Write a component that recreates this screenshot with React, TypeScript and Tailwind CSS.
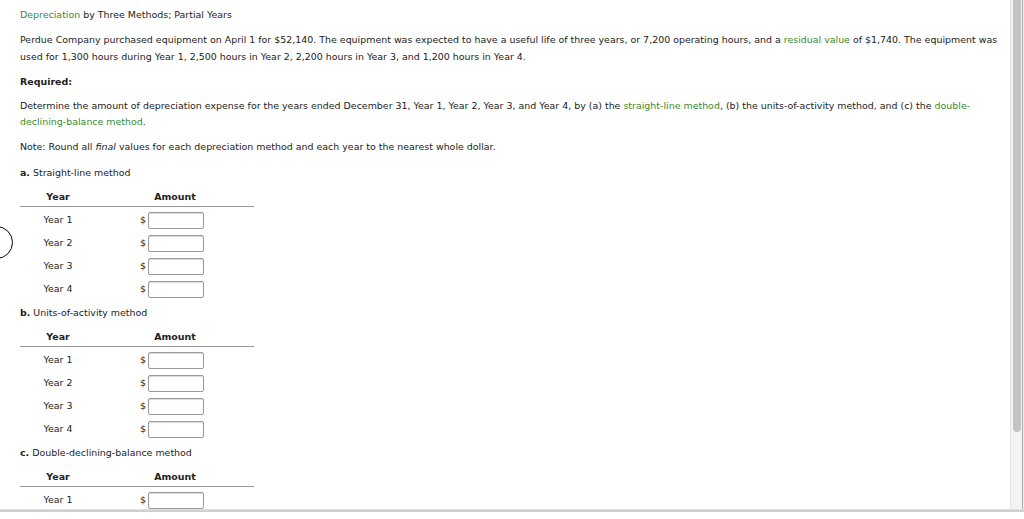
import React from "react";

const G = "text-[#3a8a34]";

function Label({ letter, text }: { letter: string; text: string }) {
  return (
    <div className="h-[17px] leading-[17px]">
      <span className="font-bold">{letter}</span> {text}
    </div>
  );
}

function Table({ rows }: { rows: string[] }) {
  return (
    <div className="w-[234px]">
      <div className="h-[26px] flex items-end pb-[1px] border-b border-[#999] font-bold">
        <div className="w-[76px] text-center leading-[17px]">Year</div>
        <div className="flex-1 text-center leading-[17px]">Amount</div>
      </div>
      <div className="pt-[2px]">
        {rows.map((r) => (
          <div key={r} className="h-[23px] flex items-center">
            <div className="w-[76px] text-center">{r}</div>
            <div className="flex-1 flex items-center pl-[44px]">
              <span className="w-[8px]">$</span>
              <input
                className="w-[56px] h-[17px] border border-[#9a9a9a] rounded-[2px] bg-white shadow-[inset_0_1px_1px_rgba(0,0,0,0.15)] outline-none"
                type="text"
              />
            </div>
          </div>
        ))}
      </div>
    </div>
  );
}

export default function App() {
  const rows4 = ["Year 1", "Year 2", "Year 3", "Year 4"];
  return (
    <div
      className="w-[1024px] h-[519px] overflow-hidden bg-white text-[#222] relative"
      style={{ fontFamily: '"DejaVu Sans", Verdana, sans-serif' }}
    >
      <div className="flex h-[509px]">
        <div className="flex-1 overflow-hidden pl-[20px] pr-[4px] pt-[6px] text-[9.45px]">
          <div className="h-[17px] leading-[17px] mb-[8px]">
            <span className={G}>Depreciation</span> by Three Methods; Partial Years
          </div>
          <p className="leading-[17px] mb-[8px] whitespace-nowrap">
            Perdue Company purchased equipment on April 1 for $52,140. The equipment was expected to have a useful life of three years, or 7,200 operating hours, and a{" "}
            <span className={G}>residual value</span> of $1,740. The equipment was
            <br />
            used for 1,300 hours during Year 1, 2,500 hours in Year 2, 2,200 hours in Year 3, and 1,200 hours in Year 4.
          </p>
          <div className="h-[17px] leading-[17px] mb-[8px] font-bold">Required:</div>
          <p className="leading-[16px] mb-[8px] whitespace-nowrap">
            Determine the amount of depreciation expense for the years ended December 31, Year 1, Year 2, Year 3, and Year 4, by (a) the{" "}
            <span className={G}>straight-line method</span>, (b) the units-of-activity method, and (c) the{" "}
            <span className={G}>double-</span>
            <br />
            <span className={G}>declining-balance method</span>.
          </p>
          <div className="h-[17px] leading-[17px]">
            Note: Round all <i>final</i> values for each depreciation method and each year to the nearest whole dollar.
          </div>
          <div className="mt-[9px]">
            <Label letter="a." text="Straight-line method" />
            <Table rows={rows4} />
          </div>
          <div className="mt-[3px]">
            <Label letter="b." text="Units-of-activity method" />
            <Table rows={rows4} />
          </div>
          <div className="mt-[3px]">
            <Label letter="c." text="Double-declining-balance method" />
            <Table rows={["Year 1"]} />
          </div>
        </div>
        <div className="w-[12px] bg-[#f3f3f3] border-l border-[#e4e4e4] flex justify-center">
          <div className="w-[8px] h-[432px] rounded-b-[4px] bg-[#c3c3c3]" />
        </div>
        <div className="w-[1px] bg-[#a8a8a8]" />
        <div className="w-[1px] bg-[#eeeeee]" />
      </div>
      <div className="h-[3px] bg-[#d0d0d0] border-t border-[#e0e0e0]" />
      <div className="absolute left-[-20px] top-[226px] w-[33px] h-[33px] rounded-full border-[1.5px] border-black" />
    </div>
  );
}
